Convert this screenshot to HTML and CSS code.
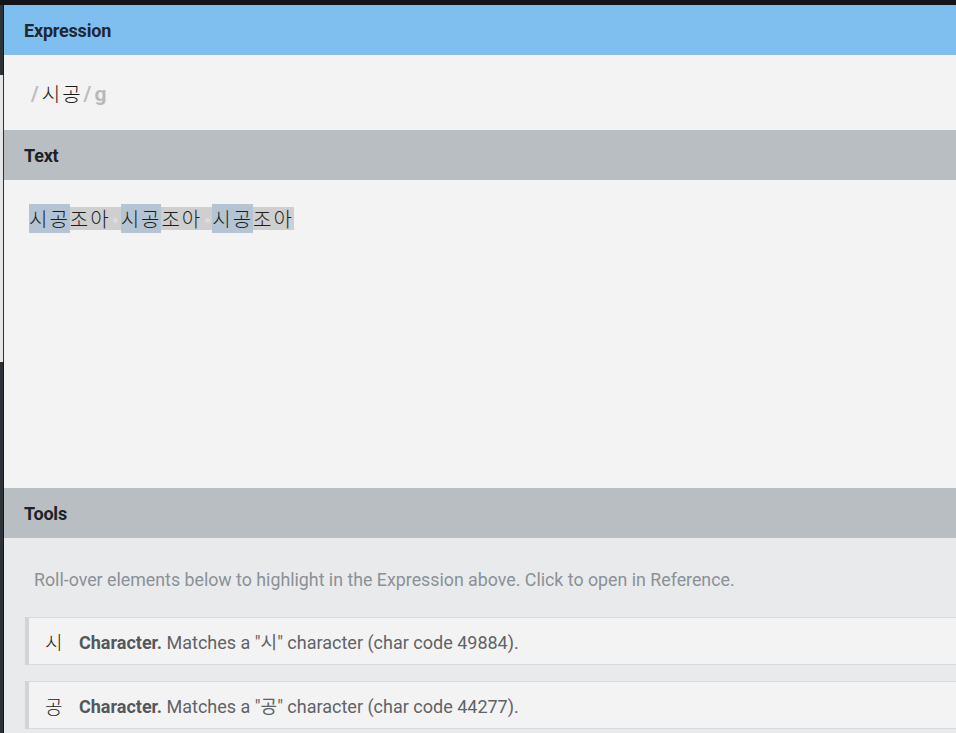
FILE: index.html
```html
<!DOCTYPE html>
<html>
<head>
<meta charset="utf-8">
<link rel="stylesheet" href="styles.css">
</head>
<body>
<div class="topbar"></div>
<div class="main">
  <div class="edge">
    <div class="edge-dark e1"></div>
    <div class="edge-light e2"></div>
    <div class="edge-dark e3"></div>
  </div>
  <div class="panel">
    <div class="head head-blue">Expression</div>
    <div class="expr">
      <span class="slash">/</span><span class="src">시공</span><span class="slash">/</span><span class="flag">g</span>
    </div>
    <div class="head head-gray">Text</div>
    <div class="textarea">
      <span class="line"><span class="m">시공</span>조아<span class="sp"><i class="dot"></i></span><span class="m">시공</span>조아<span class="sp"><i class="dot"></i></span><span class="m">시공</span>조아</span>
    </div>
    <div class="head head-gray">Tools</div>
    <div class="tools">
      <p class="hint">Roll-over elements below to highlight in the Expression above. Click to open in Reference.</p>
      <div class="item"><span class="tok">시</span><span class="desc"><b>Character.</b> Matches a "시" character (char code 49884).</span></div>
      <div class="item"><span class="tok">공</span><span class="desc"><b>Character.</b> Matches a "공" character (char code 44277).</span></div>
    </div>
  </div>
</div>
</body>
</html>
```
FILE: styles.css
```css
html, body { margin: 0; padding: 0; }
body {
  width: 956px;
  height: 733px;
  overflow: hidden;
  background: #2c3136;
  font-family: Roboto, "Noto Sans CJK KR", sans-serif;
}
.topbar { height: 5px; background: #111418; }
.main { display: flex; height: 728px; }
.edge { width: 4px; display: flex; flex-direction: column; flex-shrink: 0; }
.edge-dark { background: #2c3238; border-right: 1px solid #15181b; }
.edge-light { background: #e6e6e6; border-right: 1px solid #2a2e33; }
.e1 { height: 70px; }
.e2 { height: 287px; }
.e3 { flex: 1; }
.panel {
  flex: 1;
  display: flex;
  flex-direction: column;
  overflow: hidden;
  box-shadow: inset 6px 0 8px -4px rgba(0,0,0,0.18);
}
.panel > div { flex-shrink: 0; }
.head {
  height: 50px;
  box-sizing: border-box;
  padding-left: 20px;
  display: flex;
  align-items: center;
  font-weight: 700;
  font-size: 18px;
  color: #1d2833;
  letter-spacing: -0.2px;
  padding-top: 1px;
}
.head-blue { background: #7fbfef; border-top: 1px solid #8ab9dc; border-bottom: 1px solid #8abbe0; }
.head-gray { background: #b9bec2; color: #1e2226; }
.expr {
  height: 75px;
  background: #f3f3f3;
  display: flex;
  align-items: center;
  padding-left: 27px;
  font-size: 21px;
  padding-top: 2px;
  box-sizing: border-box;
}
.slash { color: #bdbdbd; font-weight: 700; font-family: Roboto, sans-serif; }
.src { color: #1a1a1a; font-family: "Noto Sans CJK KR", sans-serif; font-size: 20px; letter-spacing: 2px; padding: 0 1px 0 3px; font-weight: 300; }
.flag { color: #b6babd; font-weight: 700; font-family: Roboto, sans-serif; padding-left: 3px; }
.textarea {
  height: 308px;
  background: #f3f3f3;
  padding: 27px 0 0 25px;
  box-sizing: border-box;
}
.line {
  display: inline-block;
  background: #cfcfcf;
  font-family: "Noto Sans CJK KR", sans-serif;
  font-size: 20px;
  line-height: 23px;
  letter-spacing: 2px;
  color: #1f1f1f;
  font-weight: 300;
}
.m { background: #b4c4d3; }
.sp { display: inline-flex; width: 10px; height: 23px; vertical-align: top; align-items: center; justify-content: center; }
.dot { display: block; width: 5px; height: 5px; border-radius: 50%; background: #dcdcdc; margin-top: 4px; }
.tools {
  flex: 1;
  background: #e9eaeb;
  padding: 30px 0 0 21px;
}
.hint {
  margin: 0 0 25px 9px;
  font-size: 17.8px;
  color: #8a9197;
  line-height: 24px;
}
.item {
  height: 48px;
  box-sizing: border-box;
  background: #f3f3f3;
  border: 1px solid #d8d9da;
  border-left: 4px solid #d3d4d5;
  border-right: none;
  margin-bottom: 16px;
  display: flex;
  align-items: center;
  font-size: 18px;
  color: #5f6368;
}
.tok {
  width: 50px;
  padding-left: 16px;
  box-sizing: border-box;
  font-family: "Noto Sans CJK KR", sans-serif;
  color: #1a1a1a;
  font-size: 19px;
  font-weight: 300;
}
.desc b { color: #52585e; }
```
